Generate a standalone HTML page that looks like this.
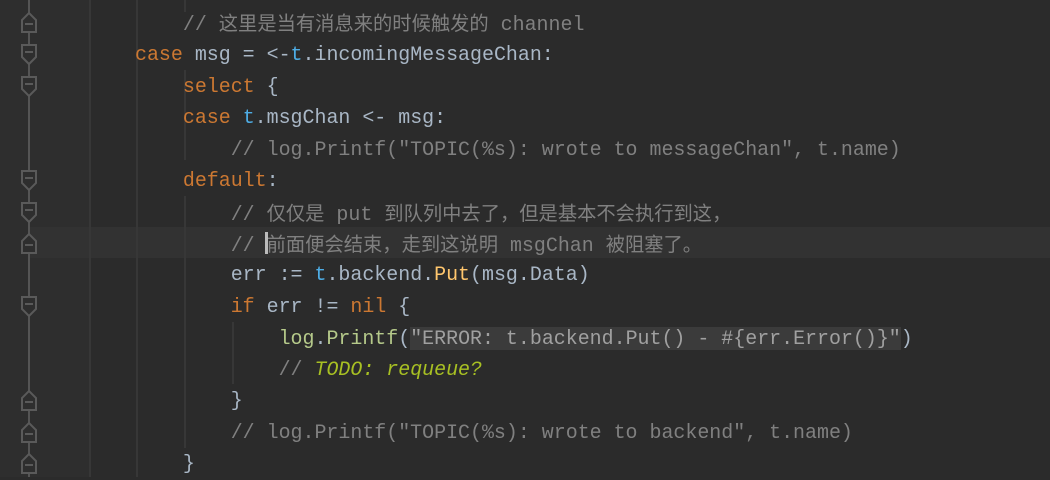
<!DOCTYPE html>
<html><head><meta charset="utf-8"><style>
body{margin:0;width:1050px;height:477px;background:#2b2b2b;overflow:hidden;position:relative;font-family:"Liberation Mono","Noto Sans CJK SC",monospace;font-size:19.95px}
.l{position:absolute;left:135px;white-space:pre;color:#a9b7c6;height:31.5px;line-height:31.5px}
.k{color:#cc7832}.b{color:#4eade5}.c{color:#808080}.f{color:#ffc66d}.g{color:#b5c98a}
.z{font-family:"Noto Sans CJK SC",sans-serif;font-size:19.3px}
.todo{color:#a8c023;font-style:italic}
.s{background:#3b3b3b;color:#a0a0a0}
.v{position:absolute;width:2px;background:#373737}
svg{position:absolute;left:0;top:0}
</style></head><body>
<div style="position:absolute;left:0;top:0;width:89px;height:477px;background:#2e2e2e"></div>
<div style="position:absolute;left:30px;top:227px;width:1020px;height:31px;background:#323232"></div>
<div class="v" style="left:89px;top:0;height:477px"></div>
<div class="v" style="left:136px;top:0;height:477px"></div>
<div class="v" style="left:184px;top:0;height:12px"></div>
<div class="v" style="left:184px;top:70px;height:90px"></div>
<div class="v" style="left:184px;top:196px;height:252px"></div>
<div class="v" style="left:232px;top:322px;height:62px"></div>
<svg width="60" height="477">
<line x1="29" y1="0" x2="29" y2="477" stroke="#555" stroke-width="2"/>
<g fill="#2e2e2e" stroke="#5a5a5a" stroke-width="2">
<g id="u"><path d="M22 32V20L29 13L36 20V32Z"/><line x1="25" y1="24" x2="33" y2="24"/></g>
<use href="#u" y="221"/><use href="#u" y="378"/><use href="#u" y="410"/><use href="#u" y="441"/>
<g id="d"><path d="M22 45V57L29 64L36 57V45Z"/><line x1="25" y1="52" x2="33" y2="52"/></g>
<use href="#d" y="0" transform="translate(0,0)"/>
</g>
<g fill="#2e2e2e" stroke="#5a5a5a" stroke-width="2">
<use href="#d" y="32"/><use href="#d" y="126"/><use href="#d" y="158"/><use href="#d" y="252"/>
</g></svg>
<div class="l" style="top:7px">    <span class="c">// <span class="z">这里是当有消息来的时候触发的</span> channel</span></div>
<div class="l" style="top:39px"><span class="k">case</span> msg = &lt;-<span class="b">t</span>.incomingMessageChan:</div>
<div class="l" style="top:71px">    <span class="k">select</span> {</div>
<div class="l" style="top:102px">    <span class="k">case</span> <span class="b">t</span>.msgChan &lt;- msg:</div>
<div class="l" style="top:134px">        <span class="c">// log.Printf("TOPIC(%s): wrote to messageChan", t.name)</span></div>
<div class="l" style="top:165px">    <span class="k">default</span>:</div>
<div class="l" style="top:197px">        <span class="c">// <span class="z">仅仅是</span> put <span class="z">到队列中去了，但是基本不会执行到这，</span></span></div>
<div class="l" style="top:228px">        <span class="c">// <span class="z">前面便会结束，走到这说明</span> msgChan <span class="z">被阻塞了。</span></span></div>
<div style="position:absolute;left:265px;top:232px;width:3px;height:22px;background:#bbb"></div>
<div class="l" style="top:259px">        err := <span class="b">t</span>.backend.<span class="f">Put</span>(msg.Data)</div>
<div class="l" style="top:291px">        <span class="k">if</span> err != <span class="k">nil</span> {</div>
<div class="l" style="top:323px">            <span class="g">log</span>.<span class="g">Printf</span>(<span class="s">"ERROR: t.backend.Put() - #{err.Error()}"</span>)</div>
<div class="l" style="top:354px">            <span class="c">// </span><span class="todo">TODO: requeue?</span></div>
<div class="l" style="top:385px">        }</div>
<div class="l" style="top:417px">        <span class="c">// log.Printf("TOPIC(%s): wrote to backend", t.name)</span></div>
<div class="l" style="top:448px">    }</div>
</body></html>
